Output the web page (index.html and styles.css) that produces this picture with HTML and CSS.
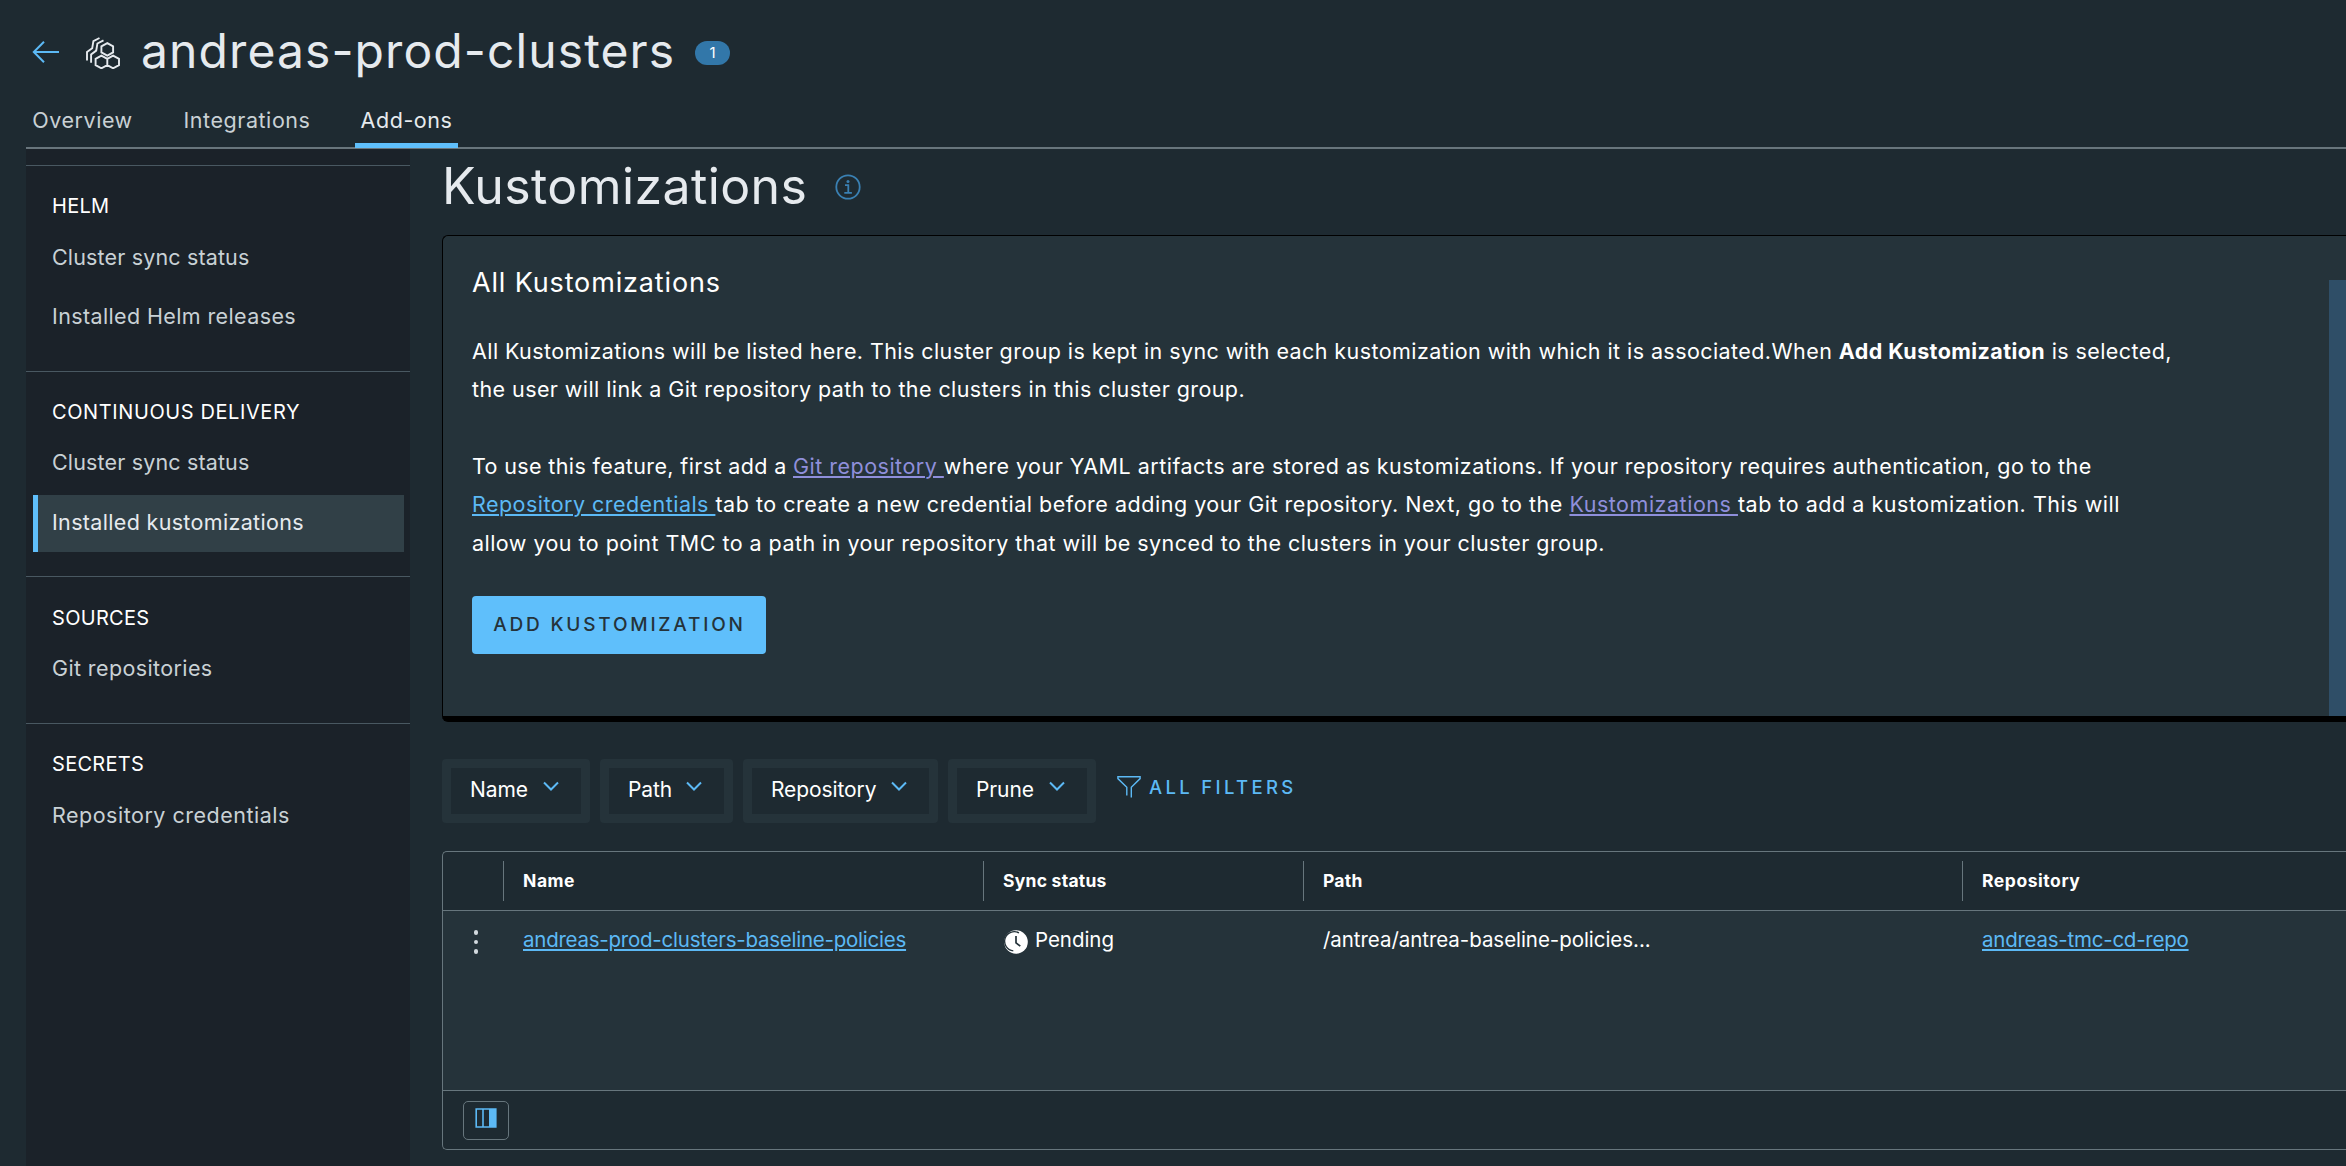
FILE: index.html
```html
<!DOCTYPE html>
<html lang="en">
<head>
<meta charset="utf-8">
<title>andreas-prod-clusters</title>
<link rel="stylesheet" href="styles.css">
</head>
<body>
<header class="header">
  <svg class="back" width="28" height="24" viewBox="0 0 28 24" fill="none" stroke="#5cb9f5" stroke-width="2"><path d="M1.5 12H27M12 1.8 1.8 12 12 22.2"/></svg>
  <svg class="cluster" width="36" height="32" viewBox="0 0 36 32" fill="none" stroke="#e6eaee" stroke-width="1.9"><path d="M22.3 6.2l5.8 3.2v6l-5.8 3.3-5.9-3.3v-6zM16.4 18.7l5.9 3.2v6.2l-5.9 3.2-5.8-3.2v-6.2zM28.1 18.7l5.9 3.2v6.2l-5.9 3.2-5.8-3.2v-6.2zM14.5 1 8.4 4.2 7.2 11.3 2 15v8.5M18.5 3.3l-6.1 3.2-1.2 7.1-5.1 3.8v8.3"/></svg>
  <h1 class="title">andreas-prod-clusters</h1>
  <span class="badge">1</span>
</header>
<nav class="tabs">
  <a class="tab tab-overview">Overview</a>
  <a class="tab tab-integrations">Integrations</a>
  <a class="tab tab-addons active">Add-ons</a>
</nav>
<div class="body">
  <aside class="sidebar">
    <section class="group group-helm"><h2>HELM</h2><a class="item">Cluster sync status</a><a class="item">Installed Helm releases</a></section>
    <section class="group group-cd"><h2>CONTINUOUS DELIVERY</h2><a class="item">Cluster sync status</a><a class="item active">Installed kustomizations</a></section>
    <section class="group group-sources"><h2>SOURCES</h2><a class="item">Git repositories</a></section>
    <section class="group group-secrets"><h2>SECRETS</h2><a class="item">Repository credentials</a></section>
  </aside>
  <main class="main">
    <div class="heading">
      <h1>Kustomizations</h1>
      <svg width="26" height="26" viewBox="0 0 26 26" fill="none" stroke="#3a80b3" stroke-width="1.8"><circle cx="13" cy="13" r="11.7"/><path d="M10 11.2h3.3v7.6M9.3 18.9h7.6"/><circle cx="13" cy="7.4" r="1.5" fill="#3a80b3" stroke="none"/></svg>
    </div>
    <section class="card">
      <div class="card-text">
        <h3>All Kustomizations</h3>
        <p>
          <span class="line l1">All Kustomizations will be listed here. This cluster group is kept in sync with each kustomization with which it is associated.When <b>Add Kustomization</b> is selected,</span>
          <span class="line l2">the user will link a Git repository path to the clusters in this cluster group.</span>
        </p>
        <p>
          <span class="line l3"><span class="lead">To use this feature, first add a </span><a class="visited">Git repository </a>where your YAML artifacts are stored as kustomizations. If your repository requires authentication, go to the</span>
          <span class="line l4"><a class="creds">Repository credentials </a>tab to create a new credential before adding your Git repository. Next, go to the <a class="visited">Kustomizations </a>tab to add a kustomization. This will</span>
          <span class="line l5">allow you to point TMC to a path in your repository that will be synced to the clusters in your cluster group.</span>
        </p>
        <button class="add">ADD KUSTOMIZATION</button>
      </div>
      <div class="side-panel"></div>
    </section>
    <div class="filters">
      <div class="filter f-name">Name<svg width="16" height="11" viewBox="0 0 16 11"><path d="M1 1.5l7 7 7-7"/></svg></div>
      <div class="filter f-path">Path<svg width="16" height="11" viewBox="0 0 16 11"><path d="M1 1.5l7 7 7-7"/></svg></div>
      <div class="filter f-repo">Repository<svg width="16" height="11" viewBox="0 0 16 11"><path d="M1 1.5l7 7 7-7"/></svg></div>
      <div class="filter f-prune">Prune<svg width="16" height="11" viewBox="0 0 16 11"><path d="M1 1.5l7 7 7-7"/></svg></div>
      <a class="all-filters"><svg width="24" height="22" viewBox="0 0 24 22" fill="none" stroke="#5cb9f5" stroke-width="1.4"><path d="M9.8 19.5v-8.2L.9 2.6V.8h22.2v1.8l-8.8 8.7v10.2"/></svg>ALL FILTERS</a>
    </div>
    <div class="table">
      <div class="row head">
        <div></div>
        <div class="cell h-name">Name</div>
        <div class="cell">Sync status</div>
        <div class="cell">Path</div>
        <div class="cell h-repo">Repository</div>
      </div>
      <div class="rows">
        <div class="row">
          <div class="kebab"><i></i><i></i><i></i></div>
          <div class="cell c-link"><a>andreas-prod-clusters-baseline-policies</a></div>
          <div class="cell c-status"><svg width="24" height="24" viewBox="0 0 24 24"><circle cx="12" cy="12" r="11.8" fill="#fff"/><path d="M15 2.9A9.6 9.6 0 1 0 9.3 20.8" fill="none" stroke="#25333a" stroke-width="1.3"/><path d="M12 6v6.8l4.3 3.4" fill="none" stroke="#25333a" stroke-width="1.7"/></svg>Pending</div>
          <div class="cell">/antrea/antrea-baseline-policies...</div>
          <div class="cell c-link"><a>andreas-tmc-cd-repo</a></div>
        </div>
      </div>
      <div class="foot">
        <button class="columns"><svg width="22" height="20" viewBox="0 0 22 20"><path d="M1.2 1h19.6v18H1.2zM8 1v18" fill="none" stroke="#5cb9f5" stroke-width="1.6"/><path d="M14 1h7v18h-7z" fill="#5cb9f5"/></svg></button>
      </div>
    </div>
  </main>
</div>
</body>
</html>
```
FILE: styles.css
```css
* { box-sizing: border-box; margin: 0; padding: 0; }
body {
  width: 2346px; height: 1166px; overflow: hidden;
  display: flex; flex-direction: column;
  background: #1e2a31; color: #fff;
  font-family: "Inter", sans-serif; font-size: 21.5px;
}
svg { display: block; flex: none; }
a { color: #5cb9f5; }
h1, h2, h3 { font-weight: 400; }

.header { display: flex; align-items: center; height: 60px; margin-top: 22px; padding-left: 32px; color: #e6eaee; }
.cluster { margin: 1px 0 0 25px; }
.title { width: 554px; margin-left: 20px; font-size: 48px; line-height: 58px; padding-bottom: 2px; letter-spacing: 1.1px; }
.badge { width: 35px; height: 24px; margin-top: 2px; border-radius: 12px; background: #3277a9; color: #fff; font-size: 15px; line-height: 24px; text-align: center; }

.tabs { display: flex; flex: none; height: 67px; margin-left: 26px; border-bottom: 2px solid #68757c; }
.tab { height: 66px; padding-top: 14px; line-height: 48px; color: #c9d1d5; letter-spacing: .55px; text-align: center; border-bottom: 5px solid transparent; }
.tab-overview { width: 113px; }
.tab-integrations { width: 132px; margin-left: 42px; }
.tab-addons { width: 103px; margin-left: 42px; }
.tab.active { color: #e6eaee; border-color: #5fbffb; }

.body { display: flex; flex: 1; min-height: 0; }
.sidebar { flex: none; width: 384px; margin-left: 26px; padding-top: 16px; background: #1b2229; }
.group { border-top: 1px solid #495861; padding: 15px 6px 0 7px; }
.group-helm { height: 206px; }
.group-cd { height: 205px; }
.group-sources { height: 147px; padding-top: 16px; }
.group h2 { height: 47px; padding-left: 19px; font-size: 20px; line-height: 50px; letter-spacing: .3px; }
.group-cd h2 { letter-spacing: .6px; }
.group-helm h2, .group-secrets h2 { height: 48px; }
.item { display: block; height: 57px; margin-bottom: 3px; padding-left: 14px; border-left: 5px solid transparent; line-height: 57px; color: #c9d1d5; letter-spacing: .38px; }
.group-helm .item:first-of-type, .group-cd .item:first-of-type { letter-spacing: .15px; }
.group-helm .item { margin-bottom: 2px; }
.group-cd .item:first-of-type { margin-bottom: 4px; }
.group-secrets .item { letter-spacing: .5px; }
.item.active { background: #314047; border-color: #5fbffb; color: #e6eaee; line-height: 55px; letter-spacing: .33px; }

.main { flex: 1; min-width: 0; margin-left: 32px; }
.heading { display: flex; align-items: center; height: 74px; color: #e6eaee; }
.heading h1 { width: 393px; font-size: 50px; letter-spacing: .4px; line-height: 74px; }
.heading svg { margin-top: 2px; }

.card { display: flex; height: 487px; margin-top: 12px; border: solid #000; border-width: 1px 0 6px 1px; border-radius: 6px 0 0 6px; background: #25333a; }
.card-text { width: 1886px; padding: 27px 0 0 29px; }
.card h3 { margin-bottom: 28.5px; font-size: 27px; line-height: 40px; letter-spacing: .85px; }
.card p { margin-bottom: 38.4px; }
.line { display: block; line-height: 38.4px; white-space: nowrap; }
.line a, .c-link a { text-decoration: underline; text-decoration-thickness: 2px; text-underline-offset: 2px; }
.line .visited { color: #8f8fdb; }
.l1 { letter-spacing: .42px; }
.l2 { letter-spacing: .42px; }
.l3 { letter-spacing: .49px; }
.lead { letter-spacing: .37px; }
.l4 { letter-spacing: .52px; }
.creds { letter-spacing: .46px; }
.l5 { letter-spacing: .46px; }
.add { width: 294px; height: 58px; margin-top: -4px; padding-bottom: 1px; border: 0; border-radius: 4px; background: #5fbffb; color: #25333a; font: 500 19px "Inter", sans-serif; letter-spacing: 2.8px; text-indent: 1px; white-space: nowrap; }
.side-panel { width: 17px; margin-top: 44px; background: #2f4e67; }

.filters { display: flex; height: 64px; margin-top: 37px; gap: 10px; }
.filter { display: flex; align-items: center; justify-content: space-between; padding: 0 17px 4px 19px; border: 9px solid #25333a; border-radius: 4px; font-size: 21px; letter-spacing: -.1px; }
.filter svg { margin: 0 5px 5px 0; fill: none; stroke: #5cb9f5; stroke-width: 2; }
.f-name { width: 148px; }
.f-path { width: 133px; }
.f-repo { width: 195px; }
.f-prune { width: 148px; }
.all-filters { display: flex; align-items: center; gap: 8px; margin: 0 0 9px 11px; font-size: 18.5px; font-weight: 500; letter-spacing: 3.35px; }

.table { height: 299px; margin-top: 28px; border: 1px solid #67767d; border-right: 0; border-radius: 5px 0 0 5px; font-size: 20.5px; }
.row { display: grid; grid-template-columns: 60px 480px 320px 659px 1fr; align-items: center; height: 57px; }
.cell { display: flex; align-items: center; padding-left: 20px; white-space: nowrap; letter-spacing: -.05px; }
.head { height: 59px; border-bottom: 1px solid #67767d; font-size: 17.5px; font-weight: 700; }
.head .cell { height: 40px; padding-bottom: 2px; border-left: 1px solid #67767d; padding-left: 19px; letter-spacing: .25px; }
.head .h-name, .head .h-repo { letter-spacing: .55px; }
.rows { height: 180px; background: #25333a; border-bottom: 1px solid #67767d; }
.c-link { letter-spacing: -.24px; }
.c-status { gap: 7px; }
.c-status svg { margin: 5px 0 0 1px; }
.kebab { display: flex; flex-direction: column; gap: 5px; margin: 5px 0 0 31px; }
.kebab i { width: 4.4px; height: 4.4px; border-radius: 50%; background: #d3dade; }
.foot { display: flex; align-items: center; height: 58px; padding-left: 20px; }
.columns { display: flex; justify-content: center; width: 46px; height: 39px; padding-top: 6px; border: 1px solid #67767d; border-radius: 5px; background: none; }
```
